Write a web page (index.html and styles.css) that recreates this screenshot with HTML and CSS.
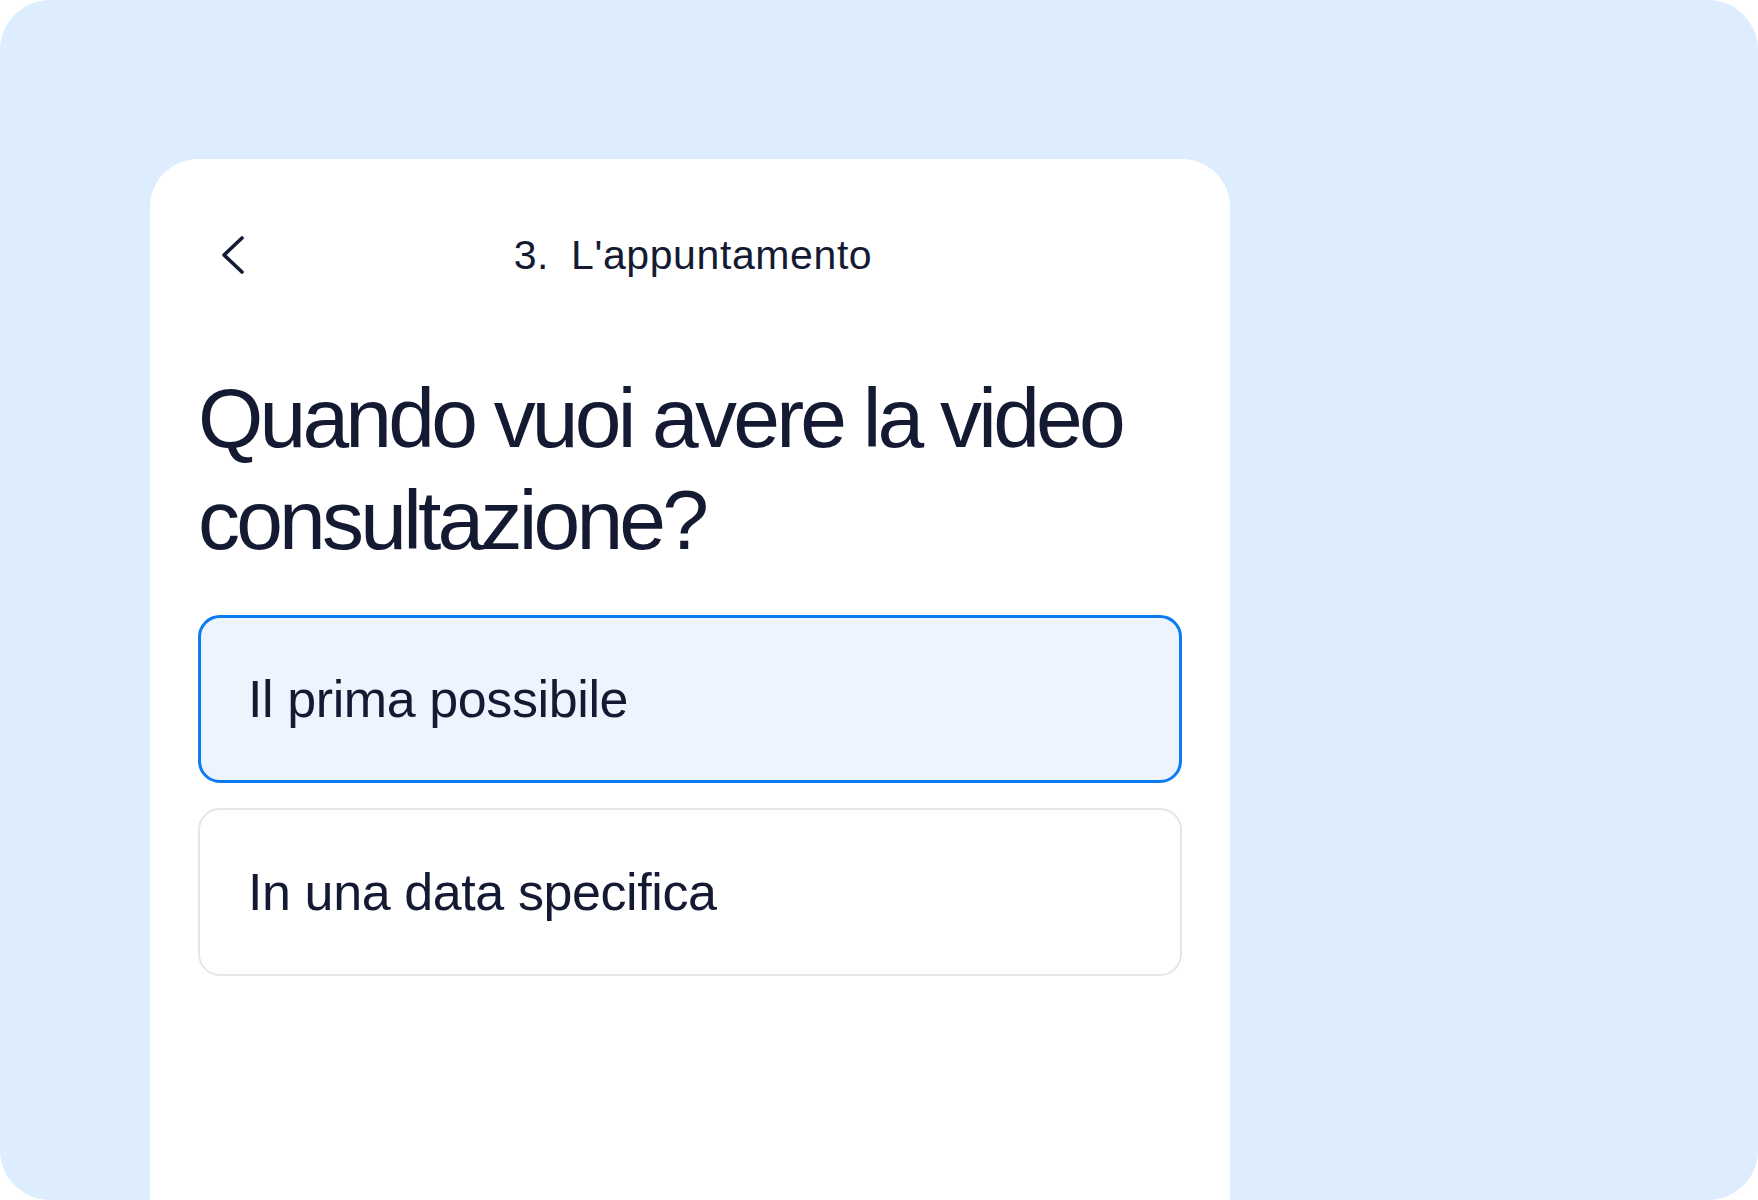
FILE: index.html
```html
<!DOCTYPE html>
<html lang="it">
<head>
<meta charset="UTF-8" />
<meta name="viewport" content="width=device-width, initial-scale=1" />
<title>L'appuntamento</title>
<link rel="stylesheet" href="styles.css">
</head>
<body>

<div class="frame">
  <div class="card">
    <div class="header">
      <button class="back" aria-label="Indietro">
        <svg width="24" height="40" viewBox="0 0 24 40">
          <path d="M21 3 L3 20 L21 37" fill="none" stroke="#151a33" stroke-width="3.6" stroke-linecap="round" stroke-linejoin="round" />
        </svg>
      </button>
      <div class="step">3. L'appuntamento</div>
    </div>

    <h1 class="question">Quando vuoi avere la video consultazione?</h1>

    <div class="options">
      <div class="option selected">Il prima possibile</div>
      <div class="option">In una data specifica</div>
    </div>
  </div>
</div>

</body>
</html>
```

FILE: styles.css
```css
body {
  margin: 0;
  background: #ffffff;
  font-family: "Liberation Sans", Arial, sans-serif;
  color: #151a33;
}
.frame {
  width: 1758px;
  height: 1200px;
  box-sizing: border-box;
  padding: 159px 0 0 150px;
  background: #deedfe;
  border-radius: 50px;
  overflow: hidden;
}
.card {
  width: 1080px;
  height: 1041px;
  box-sizing: border-box;
  padding: 56px 48px 0;
  background: #ffffff;
  border-radius: 48px 48px 0 0;
}
.header {
  display: grid;
  grid-template-columns: 1fr auto 1fr;
  align-items: center;
  height: 80px;
}
.back {
  justify-self: start;
  display: flex;
  background: none;
  border: none;
  padding: 0;
  margin-left: 23px;
  cursor: pointer;
}
.step {
  font-size: 41px;
  letter-spacing: 0.6px;
  word-spacing: 10px;
  margin-left: 6px;
}
.question {
  margin: 72px 0 0;
  font-size: 84px;
  font-weight: normal;
  line-height: 102px;
  letter-spacing: -3.8px;
}
.options {
  display: flex;
  flex-direction: column;
  gap: 25px;
  margin-top: 44px;
}
.option {
  height: 168px;
  box-sizing: border-box;
  display: flex;
  align-items: center;
  padding-left: 48px;
  border: 2px solid #e5e5ea;
  border-radius: 22px;
  font-size: 52px;
  letter-spacing: -0.4px;
}
.option.selected {
  border: 3px solid #0b7bf4;
  padding-left: 47px;
  background: #eef4fe;
}
```
